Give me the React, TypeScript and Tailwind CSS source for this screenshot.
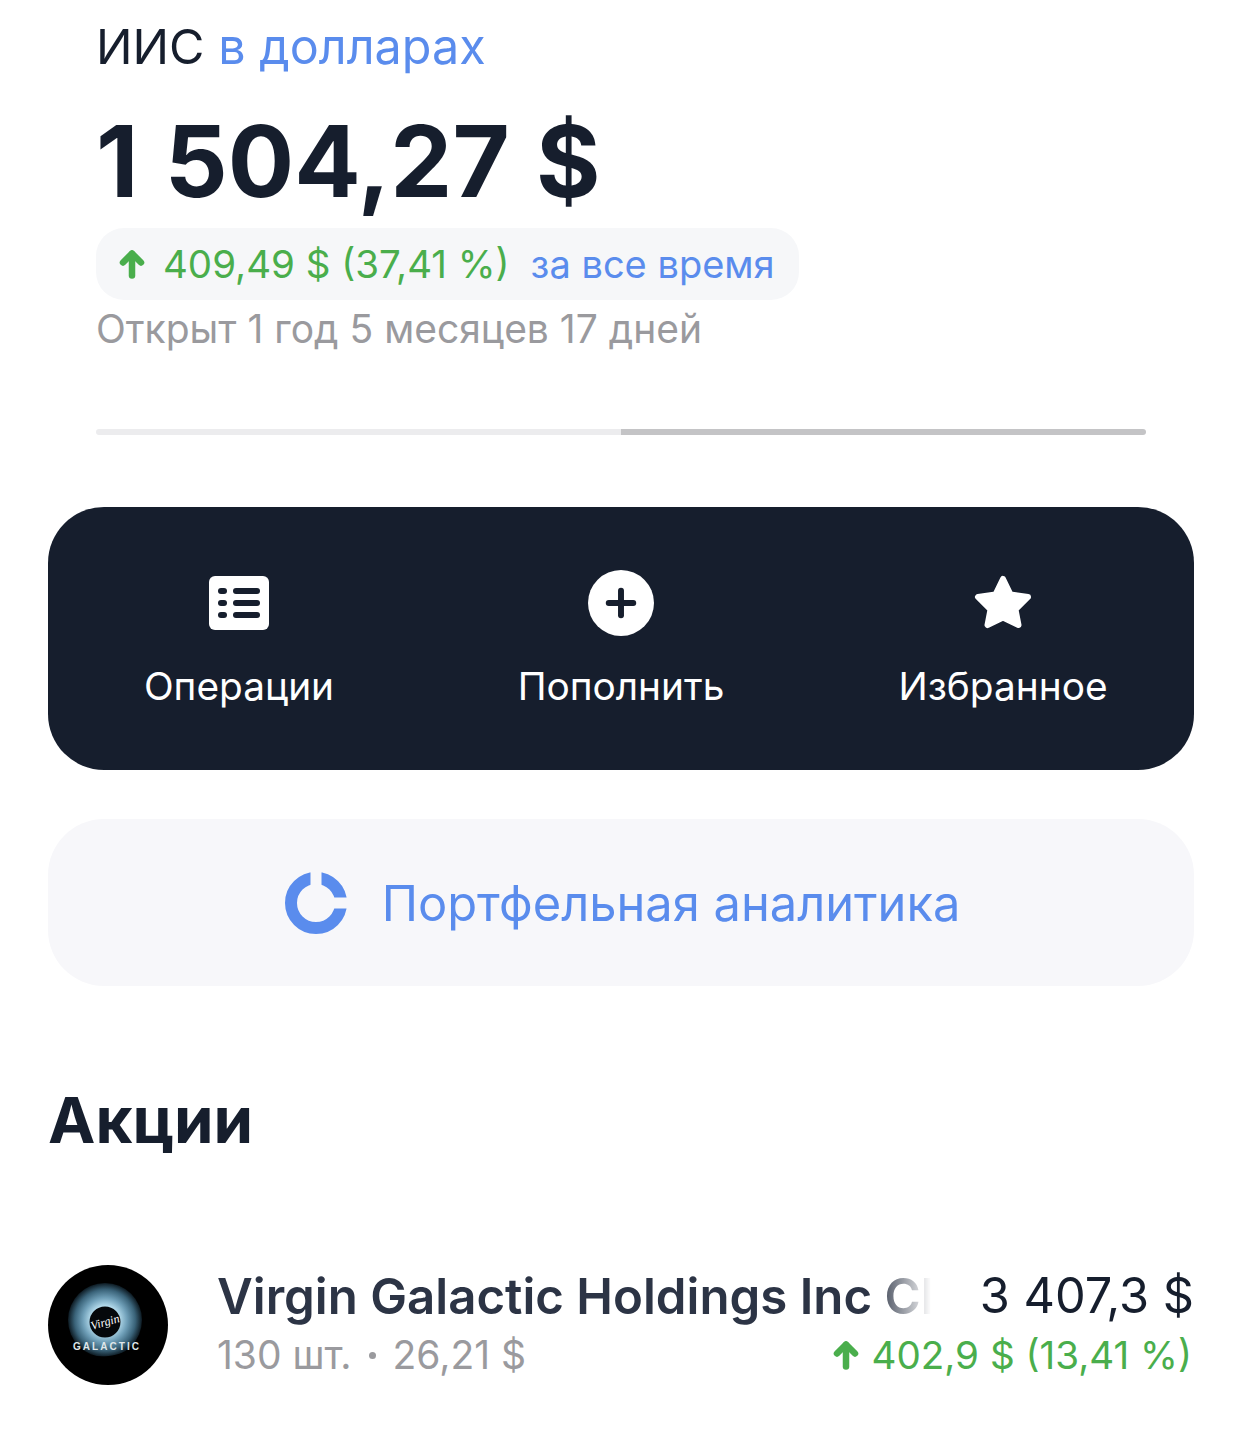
import { Plus } from 'lucide-react'

const font = "font-['Inter','Noto_Sans',sans-serif]"

function UpArrow({ className }: { className: string }) {
  return (
    <svg viewBox="0 0 26 30" className={className} fill="none" stroke="#4aae4c" strokeWidth="6.500" strokeLinecap="round" strokeLinejoin="round">
      <path d="M13 26.500V5" />
      <path d="M4 13.500 13 4.500l9 9" />
    </svg>
  )
}

function GalacticLogo() {
  return (
    <svg viewBox="0 0 120 120" className="w-[120px] h-[120px] shrink-0">
      <defs>
        <radialGradient id="iris" cx="57" cy="55" r="37" gradientUnits="userSpaceOnUse">
          <stop offset="0.38" stopColor="#b4dbec" />
          <stop offset="0.6" stopColor="#6f9fb8" />
          <stop offset="0.82" stopColor="#3a6379" />
          <stop offset="1" stopColor="#0d1a22" />
        </radialGradient>
      </defs>
      <circle cx="60" cy="60" r="60" fill="#000" />
      <circle cx="57" cy="55" r="37" fill="url(#iris)" />
      <path d="M18 76c12 19 52 22 78 0v26H18Z" fill="#000" />
      <circle cx="57" cy="57" r="15.500" fill="#05080b" />
      <text x="57" y="61" textAnchor="middle" transform="rotate(-16 57 57)" fontFamily="'Liberation Serif',serif" fontStyle="italic" fontSize="12" fill="#fff">Virgin</text>
      <text x="58" y="85" textAnchor="middle" fontFamily="'Liberation Sans',sans-serif" fontWeight="700" fontSize="10" textLength="66" fill="#dfe7ea">GALACTIC</text>
    </svg>
  )
}

export default function App() {
  return (
    <div className={`${font} w-[1242px] h-[1437px] overflow-hidden bg-white text-[#161e2d]`}>
      <div className="px-[96px]">
        <div className="h-[96px] pt-[17px] text-[48.500px] leading-[60px]">
          ИИС <span className="text-[#5a8ced]">в долларах</span>
        </div>
        <div className="h-[132px] text-[98.500px] leading-[132px] font-bold [word-spacing:3px]">1 504,27 $</div>
        <div className="flex items-center h-[72px] w-[703px] rounded-[28px] bg-[#f6f7f9] pl-[23px] text-[38px] leading-[46px]">
          <UpArrow className="w-[26px] h-[30px] mr-[18px]" />
          <span className="text-[38.500px] text-[#4aae4c]">409,49 $ (37,41 %)</span>
          <span className="text-[38px] text-[#5a8ced] ml-[21px]">за все время</span>
        </div>
        <div className="mt-[6px] text-[39px] leading-[46px] text-[#9a9a9e]">Открыт 1 год 5 месяцев 17 дней</div>
        <div className="mt-[77px] flex h-[6px] w-[1050px] rounded-full overflow-hidden">
          <div className="w-[525px] bg-[#ececee]" />
          <div className="flex-1 bg-[#c4c4c6]" />
        </div>
      </div>
      <div className="px-[48px] mt-[72px]">
        <div className="grid grid-cols-3 h-[263px] rounded-[56px] bg-[#161e2d] text-white text-[38.800px]">
          <div className="flex flex-col items-center pt-[69px]">
            <svg viewBox="0 0 60 54" className="w-[60px] h-[54px]">
              <rect width="60" height="54" rx="6" fill="#fff" />
              <g fill="#161e2d">
                <rect x="9" y="12" width="9" height="6" rx="3" />
                <rect x="9" y="24" width="9" height="6" rx="3" />
                <rect x="9" y="36" width="9" height="6" rx="3" />
                <rect x="24" y="12" width="27" height="6" rx="3" />
                <rect x="24" y="24" width="27" height="6" rx="3" />
                <rect x="24" y="36" width="27" height="6" rx="3" />
              </g>
            </svg>
            <span className="mt-[27px]">Операции</span>
          </div>
          <div className="flex flex-col items-center pt-[63px]">
            <div className="flex items-center justify-center w-[66px] h-[66px] rounded-full bg-white">
              <Plus size={42} strokeWidth={3.4} color="#161e2d" />
            </div>
            <span className="mt-[21px]">Пополнить</span>
          </div>
          <div className="flex flex-col items-center pt-[67px]">
            <svg viewBox="0 0 60 56" className="w-[60px] h-[56px]">
              <path d="M30 5 37.500 20.500 55 23 42.500 35.500 45.500 51 30 43.500 14.500 51 17.500 35.500 5 23 22.500 20.500Z" fill="#fff" stroke="#fff" strokeWidth="6" strokeLinejoin="round" />
            </svg>
            <span className="mt-[27px]">Избранное</span>
          </div>
        </div>
        <div className="mt-[49px] pl-[2px] flex items-center justify-center gap-[34px] h-[167px] rounded-[56px] bg-[#f7f7fa] text-[48.800px] text-[#5a8ced]">
          <svg viewBox="0 0 64 64" className="w-[64px] h-[64px]">
            <circle cx="32" cy="32" r="25" fill="none" stroke="#5a8ced" strokeWidth="12" />
            <rect x="26.500" y="0" width="11" height="14" fill="#f7f7fa" />
            <rect x="50" y="26.500" width="14" height="11" fill="#f7f7fa" />
          </svg>
          <span className="pt-[2px]">Портфельная аналитика</span>
        </div>
        <div className="mt-[94px] h-[80px] text-[63.500px] leading-[80px] font-bold">Акции</div>
        <div className="mt-[105px] flex">
          <GalacticLogo />
          <div className="ml-[49px] flex-1 min-w-0">
            <div className="flex justify-between text-[48.700px] leading-[60px] pt-[1px]">
              <span className="w-[714px] overflow-hidden whitespace-nowrap text-[49.200px] font-semibold text-[#2c3445] [mask-image:linear-gradient(to_right,black_92%,transparent)]">Virgin Galactic Holdings Inc Cl</span>
              <span>3 407,3 $</span>
            </div>
            <div className="flex justify-between text-[39px] leading-[56px] text-[#9a9a9e] pt-[1px]">
              <span className="flex items-center gap-[17px]">
                130 шт.
                <span className="w-[7px] h-[7px] rounded-full bg-[#9a9a9e]" />
                26,21 $
              </span>
              <span className="flex items-center text-[38.600px] text-[#4aae4c] mr-[2px]">
                <UpArrow className="w-[26px] h-[30px] mr-[12px]" />
                402,9 $ (13,41 %)
              </span>
            </div>
          </div>
        </div>
      </div>
    </div>
  )
}
